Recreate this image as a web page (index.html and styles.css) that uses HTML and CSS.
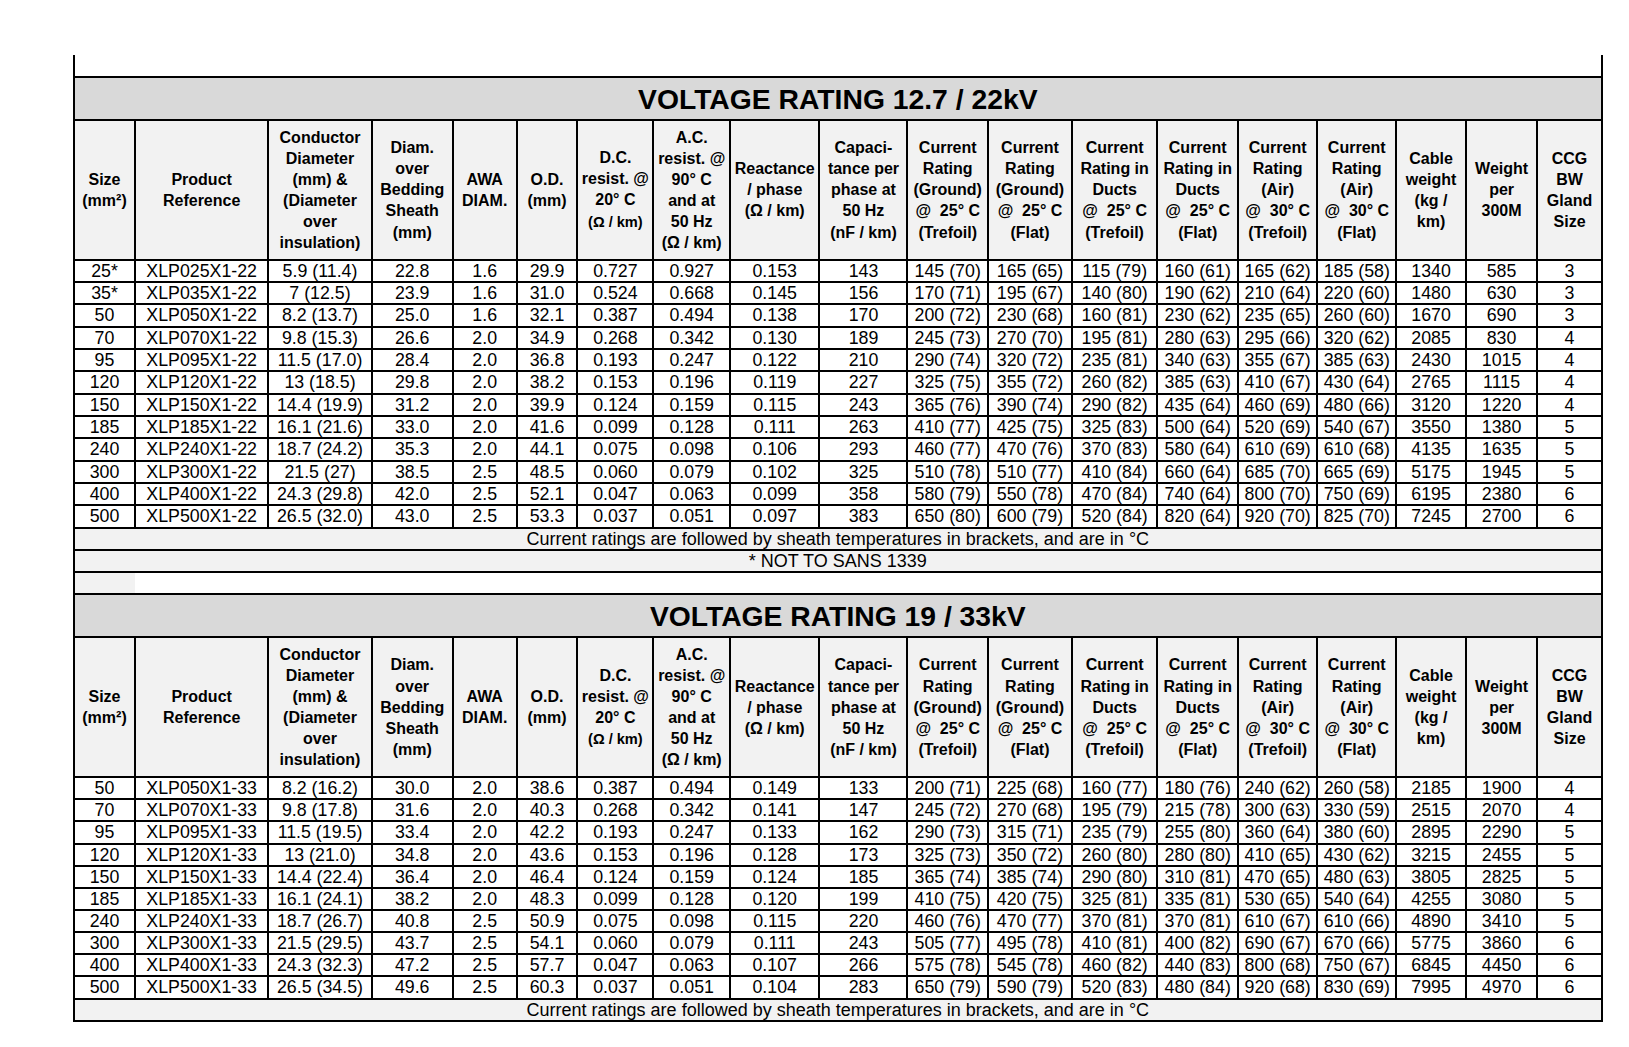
FILE: index.html
```html
<!DOCTYPE html>
<html lang="en">
<head>
<meta charset="utf-8">
<title>XLPE Cable Specifications</title>
<link rel="stylesheet" href="styles.css">
</head>
<body>
<div class="sheet">
<table class="spec">
  <colgroup>
    <col class="c-size"><col class="c-ref"><col class="c-cond"><col class="c-bed"><col class="c-awa"><col class="c-od">
    <col class="c-dc"><col class="c-ac"><col class="c-react"><col class="c-cap"><col class="c-gt"><col class="c-gf">
    <col class="c-dt"><col class="c-df"><col class="c-at"><col class="c-af"><col class="c-cw"><col class="c-wp"><col class="c-gl">
  </colgroup>
  <tbody>
    <tr class="r-top"><td colspan="19" class="top-cell"></td></tr>
    <tr class="r-title"><td colspan="19" class="title">VOLTAGE RATING 12.7 / 22kV</td></tr>
    <tr class="r-head">
      <td class="h">Size<br>(mm²)</td>
      <td class="h">Product<br>Reference</td>
      <td class="h">Conductor<br>Diameter<br>(mm) &amp;<br>(Diameter<br>over<br>insulation)</td>
      <td class="h">Diam.<br>over<br>Bedding<br>Sheath<br>(mm)</td>
      <td class="h">AWA<br>DIAM.</td>
      <td class="h">O.D.<br>(mm)</td>
      <td class="h">D.C.<br>resist. @<br>20° C<br><span class="sm">(Ω / km)</span></td>
      <td class="h">A.C.<br>resist. @<br>90° C<br>and at<br>50 Hz<br>(Ω / km)</td>
      <td class="h">Reactance<br>/ phase<br>(Ω / km)</td>
      <td class="h">Capaci-<br>tance per<br>phase at<br>50 Hz<br>(nF / km)</td>
      <td class="h">Current<br>Rating<br>(Ground)<br>@&nbsp; 25° C<br>(Trefoil)</td>
      <td class="h">Current<br>Rating<br>(Ground)<br>@&nbsp; 25° C<br>(Flat)</td>
      <td class="h">Current<br>Rating in<br>Ducts<br>@&nbsp; 25° C<br>(Trefoil)</td>
      <td class="h">Current<br>Rating in<br>Ducts<br>@&nbsp; 25° C<br>(Flat)</td>
      <td class="h">Current<br>Rating<br>(Air)<br>@&nbsp; 30° C<br>(Trefoil)</td>
      <td class="h">Current<br>Rating<br>(Air)<br>@&nbsp; 30° C<br>(Flat)</td>
      <td class="h">Cable<br>weight<br>(kg /<br>km)</td>
      <td class="h">Weight<br>per<br>300M</td>
      <td class="h">CCG<br>BW<br>Gland<br>Size</td>
    </tr>
    <tr class="d"><td>25*</td><td>XLP025X1-22</td><td>5.9 (11.4)</td><td>22.8</td><td>1.6</td><td>29.9</td><td>0.727</td><td>0.927</td><td>0.153</td><td>143</td><td>145 (70)</td><td>165 (65)</td><td>115 (79)</td><td>160 (61)</td><td>165 (62)</td><td>185 (58)</td><td>1340</td><td>585</td><td>3</td></tr>
    <tr class="d"><td>35*</td><td>XLP035X1-22</td><td>7 (12.5)</td><td>23.9</td><td>1.6</td><td>31.0</td><td>0.524</td><td>0.668</td><td>0.145</td><td>156</td><td>170 (71)</td><td>195 (67)</td><td>140 (80)</td><td>190 (62)</td><td>210 (64)</td><td>220 (60)</td><td>1480</td><td>630</td><td>3</td></tr>
    <tr class="d"><td>50</td><td>XLP050X1-22</td><td>8.2 (13.7)</td><td>25.0</td><td>1.6</td><td>32.1</td><td>0.387</td><td>0.494</td><td>0.138</td><td>170</td><td>200 (72)</td><td>230 (68)</td><td>160 (81)</td><td>230 (62)</td><td>235 (65)</td><td>260 (60)</td><td>1670</td><td>690</td><td>3</td></tr>
    <tr class="d"><td>70</td><td>XLP070X1-22</td><td>9.8 (15.3)</td><td>26.6</td><td>2.0</td><td>34.9</td><td>0.268</td><td>0.342</td><td>0.130</td><td>189</td><td>245 (73)</td><td>270 (70)</td><td>195 (81)</td><td>280 (63)</td><td>295 (66)</td><td>320 (62)</td><td>2085</td><td>830</td><td>4</td></tr>
    <tr class="d"><td>95</td><td>XLP095X1-22</td><td>11.5 (17.0)</td><td>28.4</td><td>2.0</td><td>36.8</td><td>0.193</td><td>0.247</td><td>0.122</td><td>210</td><td>290 (74)</td><td>320 (72)</td><td>235 (81)</td><td>340 (63)</td><td>355 (67)</td><td>385 (63)</td><td>2430</td><td>1015</td><td>4</td></tr>
    <tr class="d"><td>120</td><td>XLP120X1-22</td><td>13 (18.5)</td><td>29.8</td><td>2.0</td><td>38.2</td><td>0.153</td><td>0.196</td><td>0.119</td><td>227</td><td>325 (75)</td><td>355 (72)</td><td>260 (82)</td><td>385 (63)</td><td>410 (67)</td><td>430 (64)</td><td>2765</td><td>1115</td><td>4</td></tr>
    <tr class="d"><td>150</td><td>XLP150X1-22</td><td>14.4 (19.9)</td><td>31.2</td><td>2.0</td><td>39.9</td><td>0.124</td><td>0.159</td><td>0.115</td><td>243</td><td>365 (76)</td><td>390 (74)</td><td>290 (82)</td><td>435 (64)</td><td>460 (69)</td><td>480 (66)</td><td>3120</td><td>1220</td><td>4</td></tr>
    <tr class="d"><td>185</td><td>XLP185X1-22</td><td>16.1 (21.6)</td><td>33.0</td><td>2.0</td><td>41.6</td><td>0.099</td><td>0.128</td><td>0.111</td><td>263</td><td>410 (77)</td><td>425 (75)</td><td>325 (83)</td><td>500 (64)</td><td>520 (69)</td><td>540 (67)</td><td>3550</td><td>1380</td><td>5</td></tr>
    <tr class="d"><td>240</td><td>XLP240X1-22</td><td>18.7 (24.2)</td><td>35.3</td><td>2.0</td><td>44.1</td><td>0.075</td><td>0.098</td><td>0.106</td><td>293</td><td>460 (77)</td><td>470 (76)</td><td>370 (83)</td><td>580 (64)</td><td>610 (69)</td><td>610 (68)</td><td>4135</td><td>1635</td><td>5</td></tr>
    <tr class="d"><td>300</td><td>XLP300X1-22</td><td>21.5 (27)</td><td>38.5</td><td>2.5</td><td>48.5</td><td>0.060</td><td>0.079</td><td>0.102</td><td>325</td><td>510 (78)</td><td>510 (77)</td><td>410 (84)</td><td>660 (64)</td><td>685 (70)</td><td>665 (69)</td><td>5175</td><td>1945</td><td>5</td></tr>
    <tr class="d"><td>400</td><td>XLP400X1-22</td><td>24.3 (29.8)</td><td>42.0</td><td>2.5</td><td>52.1</td><td>0.047</td><td>0.063</td><td>0.099</td><td>358</td><td>580 (79)</td><td>550 (78)</td><td>470 (84)</td><td>740 (64)</td><td>800 (70)</td><td>750 (69)</td><td>6195</td><td>2380</td><td>6</td></tr>
    <tr class="d"><td>500</td><td>XLP500X1-22</td><td>26.5 (32.0)</td><td>43.0</td><td>2.5</td><td>53.3</td><td>0.037</td><td>0.051</td><td>0.097</td><td>383</td><td>650 (80)</td><td>600 (79)</td><td>520 (84)</td><td>820 (64)</td><td>920 (70)</td><td>825 (70)</td><td>7245</td><td>2700</td><td>6</td></tr>
    <tr class="r-note"><td colspan="19" class="note">Current ratings are followed by sheath temperatures in brackets, and are in °C</td></tr>
    <tr class="r-note"><td colspan="19" class="note">* NOT TO SANS 1339</td></tr>
    <tr class="r-blank"><td class="blank-lead"></td><td colspan="18" class="blank-rest"></td></tr>
    <tr class="r-title"><td colspan="19" class="title">VOLTAGE RATING 19 / 33kV</td></tr>
    <tr class="r-head r-head2">
      <td class="h">Size<br>(mm²)</td>
      <td class="h">Product<br>Reference</td>
      <td class="h">Conductor<br>Diameter<br>(mm) &amp;<br>(Diameter<br>over<br>insulation)</td>
      <td class="h">Diam.<br>over<br>Bedding<br>Sheath<br>(mm)</td>
      <td class="h">AWA<br>DIAM.</td>
      <td class="h">O.D.<br>(mm)</td>
      <td class="h">D.C.<br>resist. @<br>20° C<br><span class="sm">(Ω / km)</span></td>
      <td class="h">A.C.<br>resist. @<br>90° C<br>and at<br>50 Hz<br>(Ω / km)</td>
      <td class="h">Reactance<br>/ phase<br>(Ω / km)</td>
      <td class="h">Capaci-<br>tance per<br>phase at<br>50 Hz<br>(nF / km)</td>
      <td class="h">Current<br>Rating<br>(Ground)<br>@&nbsp; 25° C<br>(Trefoil)</td>
      <td class="h">Current<br>Rating<br>(Ground)<br>@&nbsp; 25° C<br>(Flat)</td>
      <td class="h">Current<br>Rating in<br>Ducts<br>@&nbsp; 25° C<br>(Trefoil)</td>
      <td class="h">Current<br>Rating in<br>Ducts<br>@&nbsp; 25° C<br>(Flat)</td>
      <td class="h">Current<br>Rating<br>(Air)<br>@&nbsp; 30° C<br>(Trefoil)</td>
      <td class="h">Current<br>Rating<br>(Air)<br>@&nbsp; 30° C<br>(Flat)</td>
      <td class="h">Cable<br>weight<br>(kg /<br>km)</td>
      <td class="h">Weight<br>per<br>300M</td>
      <td class="h">CCG<br>BW<br>Gland<br>Size</td>
    </tr>
    <tr class="d d2"><td>50</td><td>XLP050X1-33</td><td>8.2 (16.2)</td><td>30.0</td><td>2.0</td><td>38.6</td><td>0.387</td><td>0.494</td><td>0.149</td><td>133</td><td>200 (71)</td><td>225 (68)</td><td>160 (77)</td><td>180 (76)</td><td>240 (62)</td><td>260 (58)</td><td>2185</td><td>1900</td><td>4</td></tr>
    <tr class="d d2"><td>70</td><td>XLP070X1-33</td><td>9.8 (17.8)</td><td>31.6</td><td>2.0</td><td>40.3</td><td>0.268</td><td>0.342</td><td>0.141</td><td>147</td><td>245 (72)</td><td>270 (68)</td><td>195 (79)</td><td>215 (78)</td><td>300 (63)</td><td>330 (59)</td><td>2515</td><td>2070</td><td>4</td></tr>
    <tr class="d d2"><td>95</td><td>XLP095X1-33</td><td>11.5 (19.5)</td><td>33.4</td><td>2.0</td><td>42.2</td><td>0.193</td><td>0.247</td><td>0.133</td><td>162</td><td>290 (73)</td><td>315 (71)</td><td>235 (79)</td><td>255 (80)</td><td>360 (64)</td><td>380 (60)</td><td>2895</td><td>2290</td><td>5</td></tr>
    <tr class="d d2"><td>120</td><td>XLP120X1-33</td><td>13 (21.0)</td><td>34.8</td><td>2.0</td><td>43.6</td><td>0.153</td><td>0.196</td><td>0.128</td><td>173</td><td>325 (73)</td><td>350 (72)</td><td>260 (80)</td><td>280 (80)</td><td>410 (65)</td><td>430 (62)</td><td>3215</td><td>2455</td><td>5</td></tr>
    <tr class="d d2"><td>150</td><td>XLP150X1-33</td><td>14.4 (22.4)</td><td>36.4</td><td>2.0</td><td>46.4</td><td>0.124</td><td>0.159</td><td>0.124</td><td>185</td><td>365 (74)</td><td>385 (74)</td><td>290 (80)</td><td>310 (81)</td><td>470 (65)</td><td>480 (63)</td><td>3805</td><td>2825</td><td>5</td></tr>
    <tr class="d d2"><td>185</td><td>XLP185X1-33</td><td>16.1 (24.1)</td><td>38.2</td><td>2.0</td><td>48.3</td><td>0.099</td><td>0.128</td><td>0.120</td><td>199</td><td>410 (75)</td><td>420 (75)</td><td>325 (81)</td><td>335 (81)</td><td>530 (65)</td><td>540 (64)</td><td>4255</td><td>3080</td><td>5</td></tr>
    <tr class="d d2"><td>240</td><td>XLP240X1-33</td><td>18.7 (26.7)</td><td>40.8</td><td>2.5</td><td>50.9</td><td>0.075</td><td>0.098</td><td>0.115</td><td>220</td><td>460 (76)</td><td>470 (77)</td><td>370 (81)</td><td>370 (81)</td><td>610 (67)</td><td>610 (66)</td><td>4890</td><td>3410</td><td>5</td></tr>
    <tr class="d d2"><td>300</td><td>XLP300X1-33</td><td>21.5 (29.5)</td><td>43.7</td><td>2.5</td><td>54.1</td><td>0.060</td><td>0.079</td><td>0.111</td><td>243</td><td>505 (77)</td><td>495 (78)</td><td>410 (81)</td><td>400 (82)</td><td>690 (67)</td><td>670 (66)</td><td>5775</td><td>3860</td><td>6</td></tr>
    <tr class="d d2"><td>400</td><td>XLP400X1-33</td><td>24.3 (32.3)</td><td>47.2</td><td>2.5</td><td>57.7</td><td>0.047</td><td>0.063</td><td>0.107</td><td>266</td><td>575 (78)</td><td>545 (78)</td><td>460 (82)</td><td>440 (83)</td><td>800 (68)</td><td>750 (67)</td><td>6845</td><td>4450</td><td>6</td></tr>
    <tr class="d d2"><td>500</td><td>XLP500X1-33</td><td>26.5 (34.5)</td><td>49.6</td><td>2.5</td><td>60.3</td><td>0.037</td><td>0.051</td><td>0.104</td><td>283</td><td>650 (79)</td><td>590 (79)</td><td>520 (83)</td><td>480 (84)</td><td>920 (68)</td><td>830 (69)</td><td>7995</td><td>4970</td><td>6</td></tr>
    <tr class="r-note r-last"><td colspan="19" class="note">Current ratings are followed by sheath temperatures in brackets, and are in °C</td></tr>
  </tbody>
</table>
</div>
</body>
</html>
```

FILE: styles.css
```css
html, body {
  margin: 0;
  padding: 0;
  background: #ffffff;
}

body {
  font-family: "Liberation Sans", Arial, Helvetica, sans-serif;
  color: #000000;
}

.sheet {
  padding: 55px 0 0 73px;
}

.spec {
  border-collapse: collapse;
  table-layout: fixed;
  width: 1529px;
}

.c-size  { width: 61px; }
.c-ref   { width: 133.3px; }
.c-cond  { width: 103.4px; }
.c-bed   { width: 81px; }
.c-awa   { width: 64px; }
.c-od    { width: 60.6px; }
.c-dc    { width: 76.2px; }
.c-ac    { width: 76.5px; }
.c-react { width: 89.5px; }
.c-cap   { width: 88px; }
.c-gt    { width: 80.5px; }
.c-gf    { width: 84px; }
.c-dt    { width: 85.3px; }
.c-df    { width: 80.9px; }
.c-at    { width: 79px; }
.c-af    { width: 79.2px; }
.c-cw    { width: 69.4px; }
.c-wp    { width: 71.7px; }
.c-gl    { width: 64px; }

.spec td {
  border: 2px solid #000000;
  padding: 0;
  text-align: center;
  vertical-align: middle;
  white-space: nowrap;
  overflow: hidden;
}

.r-top { height: 22px; }
.top-cell {
  border-top-style: hidden !important;
  background: #ffffff;
}

.r-title { height: 43.3px; }
.title {
  background: #d9d9d9;
  font-size: 28.3px;
  font-weight: bold;
  line-height: 32px;
}

.r-head { height: 139.3px; }
.r-head2 { height: 139.8px; }
.h {
  background: #f2f2f2;
  font-size: 16px;
  font-weight: bold;
  line-height: 21.1px;
}
.h .sm {
  font-size: 14.6px;
}

.d { height: 22.33px; }
.d2 { height: 22.15px; }
.d td {
  font-size: 17.8px;
  line-height: 20px;
  background: #ffffff;
}

.r-note { height: 22.1px; }
.note {
  background: #f2f2f2;
  font-size: 18px;
  line-height: 20px;
}

.r-blank { height: 22.3px; }
.blank-lead {
  background: #f2f2f2;
  border-right-style: hidden !important;
}
.blank-rest {
  background: #ffffff;
}
```
